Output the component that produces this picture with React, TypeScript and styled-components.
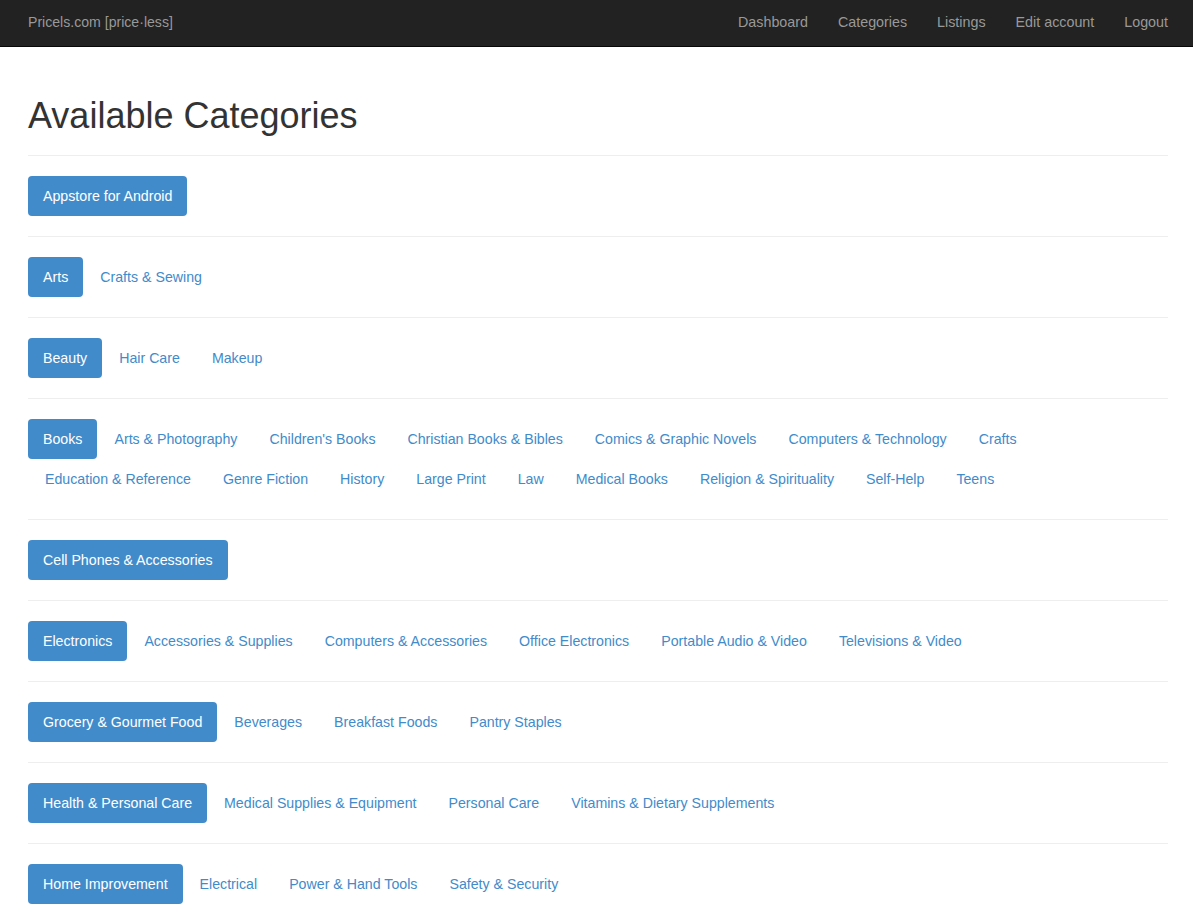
import * as React from 'react';
import styled, { createGlobalStyle } from 'styled-components';

const GlobalStyle = createGlobalStyle`
  html, body {
    margin: 0;
    padding: 0;
    background: #fff;
    overflow: hidden;
  }
  *, *::before, *::after {
    box-sizing: border-box;
  }
  body {
    font-family: "Liberation Sans", Arial, Helvetica, sans-serif;
    font-size: 14px;
    line-height: 20px;
    color: #333;
  }
`;

const Navbar = styled.nav`
  height: 47px;
  background: #222;
  border-bottom: 1px solid #080808;
  display: flex;
  align-items: center;
  justify-content: space-between;
  padding: 0 10px 2px 28px;
`;

const Brand = styled.a`
  color: #999;
  font-size: 14.1px;
  text-decoration: none;
`;

const NavList = styled.ul`
  list-style: none;
  display: flex;
  margin: 0;
  padding: 0;
`;

const NavLink = styled.a`
  display: block;
  color: #999;
  font-size: 14.3px;
  padding: 0 15px;
  text-decoration: none;
`;

const Container = styled.main`
  padding: 0 25px 0 28px;
`;

const PageHeader = styled.div`
  margin-top: 49px;
  padding-bottom: 9px;
  border-bottom: 1px solid #eee;
`;

const Title = styled.h1`
  margin: 0 0 10px;
  font-size: 36px;
  font-weight: 500;
  line-height: 39.6px;
  color: #333;
`;

const CategoryRow = styled.div`
  padding: 20px 0;
  border-bottom: 1px solid #eee;
`;

const Pills = styled.ul`
  list-style: none;
  display: flex;
  flex-wrap: wrap;
  margin: 0;
  padding: 0;
  & > li + li {
    margin-left: 2px;
  }
`;

const Pill = styled.a<{ $active?: boolean }>`
  display: block;
  padding: 10px 15px;
  border-radius: 4px;
  font-size: 14.2px;
  line-height: 20px;
  text-decoration: none;
  white-space: nowrap;
  color: ${(p) => (p.$active ? '#fff' : '#428bca')};
  background: ${(p) => (p.$active ? '#428bca' : 'transparent')};
`;

const categories: [string, string[]][] = [
  ['Appstore for Android', []],
  ['Arts', ['Crafts & Sewing']],
  ['Beauty', ['Hair Care', 'Makeup']],
  [
    'Books',
    [
      'Arts & Photography',
      "Children's Books",
      'Christian Books & Bibles',
      'Comics & Graphic Novels',
      'Computers & Technology',
      'Crafts',
      'Education & Reference',
      'Genre Fiction',
      'History',
      'Large Print',
      'Law',
      'Medical Books',
      'Religion & Spirituality',
      'Self-Help',
      'Teens',
    ],
  ],
  ['Cell Phones & Accessories', []],
  [
    'Electronics',
    [
      'Accessories & Supplies',
      'Computers & Accessories',
      'Office Electronics',
      'Portable Audio & Video',
      'Televisions & Video',
    ],
  ],
  ['Grocery & Gourmet Food', ['Beverages', 'Breakfast Foods', 'Pantry Staples']],
  [
    'Health & Personal Care',
    ['Medical Supplies & Equipment', 'Personal Care', 'Vitamins & Dietary Supplements'],
  ],
  ['Home Improvement', ['Electrical', 'Power & Hand Tools', 'Safety & Security']],
];

const navItems = ['Dashboard', 'Categories', 'Listings', 'Edit account', 'Logout'];

export default function App() {
  return (
    <>
      <GlobalStyle />
      <Navbar>
        <Brand href="#">Pricels.com [price·less]</Brand>
        <NavList>
          {navItems.map((n) => (
            <li key={n}>
              <NavLink href="#">{n}</NavLink>
            </li>
          ))}
        </NavList>
      </Navbar>
      <Container>
        <PageHeader>
          <Title>Available Categories</Title>
        </PageHeader>
        {categories.map(([name, subs]) => (
          <CategoryRow key={name}>
            <Pills>
              <li>
                <Pill $active href="#">
                  {name}
                </Pill>
              </li>
              {subs.map((s) => (
                <li key={s}>
                  <Pill href="#">{s}</Pill>
                </li>
              ))}
            </Pills>
          </CategoryRow>
        ))}
      </Container>
    </>
  );
}
